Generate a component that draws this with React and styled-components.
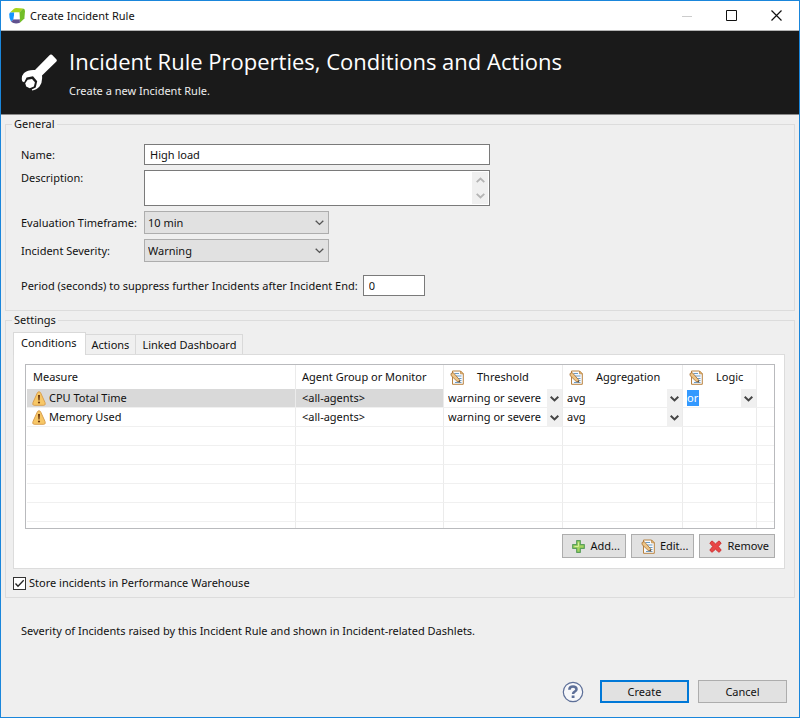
import React from "react";
import styled, { createGlobalStyle, css } from "styled-components";

const GlobalStyle = createGlobalStyle`
  *, *::before, *::after { box-sizing: border-box; }
  body { margin: 0; background: #efefef; }
  body, button, input, select, textarea {
    font-family: "Noto Sans", "Open Sans", sans-serif;
    font-size: 11px;
    line-height: 16px;
    color: #111;
  }
`;

const Window = styled.main`
  display: flex;
  flex-direction: column;
  min-height: 100vh;
  border: 1px solid #1a86db;
  background: #efefef;
`;

const TitleBar = styled.header`
  display: flex;
  align-items: center;
  height: 30px;
  padding-left: 8px;
  background: #fff;
  border-bottom: 1px solid #b4b4b4;
`;

const WindowTitle = styled.span`
  flex: 1;
  padding-left: 5px;
`;

const CaptionButton = styled.button`
  display: flex;
  align-items: center;
  justify-content: center;
  width: 45px;
  height: 29px;
  padding: 0;
  border: 0;
  background: transparent;
  color: ${(p) => (p.disabled ? "#ccc" : "#111")};
`;

const Banner = styled.section`
  display: flex;
  align-items: center;
  gap: 11px;
  height: 84px;
  padding-left: 20px;
  background: #1a1a1a;
  border-bottom: 1px solid #8a8a8a;
  color: #fff;
`;

const BannerTitle = styled.h1`
  margin: 0 0 7px;
  font-family: "Open Sans", "Noto Sans", sans-serif;
  font-size: 22px;
  line-height: 30px;
  font-weight: 400;
`;

const BannerText = styled.p`
  margin: 0;
  color: #eee;
`;

const Body = styled.div`
  display: flex;
  flex-direction: column;
  padding: 1px 4px 0;
`;

const Group = styled.fieldset`
  min-width: 0;
  margin: 0 0 1px;
  padding: ${(p) => p.$padding};
  border: 1px solid #dcdcdc;
`;

const GroupTitle = styled.legend`
  margin-left: ${(p) => p.$offset};
  padding: 0 2px;
`;

const Form = styled.div`
  display: grid;
  grid-template-columns: 123px minmax(0, 346px);
  row-gap: 5px;
  align-items: center;
`;

const FieldLabel = styled.label`
  white-space: nowrap;
  ${(p) => p.$top && css`align-self: start;`}
`;

const TextBox = styled.input`
  width: ${(p) => (p.$short ? "62px" : "100%")};
  height: 21px;
  padding: 0 5px;
  border: 1px solid #7a7a7a;
  background: #fff;
  outline: 0;
`;

const AreaFrame = styled.div`
  display: flex;
  height: 36px;
  padding: 1px;
  border: 1px solid #7a7a7a;
  background: #fff;
`;

const Area = styled.textarea`
  flex: 1;
  min-width: 0;
  padding: 2px 4px;
  border: 0;
  outline: 0;
  resize: none;
  overflow: hidden;
  background: transparent;
`;

const ScrollTrack = styled.div`
  display: flex;
  flex-direction: column;
  align-items: center;
  justify-content: space-between;
  width: 16px;
  padding: 4px 0;
  background: #f0f0f0;
  color: #b4b4b4;
`;

const DropFrame = styled.span`
  display: grid;
  grid-template-columns: 1fr 17px;
  align-items: center;
  width: 185px;
  height: 23px;
  border: 1px solid #adadad;
  background: #e1e1e1;
  color: #555;
`;

const Drop = styled.select`
  grid-column: 1 / 3;
  grid-row: 1;
  width: 100%;
  height: 21px;
  padding: 0 3px;
  border: 0;
  outline: 0;
  appearance: none;
  background: transparent;
`;

const DropArrow = styled.span`
  display: flex;
  justify-content: center;
  grid-column: 2;
  grid-row: 1;
  pointer-events: none;
`;

const PeriodRow = styled.div`
  display: flex;
  align-items: center;
  gap: 5px;
  margin-top: 13px;
`;

const TabList = styled.div`
  display: flex;
  align-items: flex-end;
  height: 23px;
`;

const Tab = styled.button`
  height: 20px;
  margin: 0;
  padding: 0 6px;
  border: 1px solid #d9d9d9;
  border-left-width: 0;
  border-bottom: 0;
  background: #f0f0f0;
  ${(p) =>
    p.$active &&
    css`
      height: 23px;
      margin-bottom: -1px;
      padding: 0 8px 3px 7px;
      border-left-width: 1px;
      background: #fff;
      position: relative;
    `}
`;

const TabPanel = styled.div`
  padding: 9px 9px 10px 11px;
  border: 1px solid #dcdcdc;
  background: #fff;
`;

const TableFrame = styled.div`
  height: 165px;
  padding-left: 1px;
  border: 1px solid #b9babd;
  overflow: hidden;
`;

const Table = styled.table`
  width: 100%;
  table-layout: fixed;
  border-collapse: separate;
  border-spacing: 0;
`;

const Col = styled.col`
  width: ${(p) => p.$width};
`;

const HeadCell = styled.th`
  height: 24px;
  padding: 0 6px;
  border-right: 1px solid #ebebeb;
  font-weight: 400;
  text-align: left;
  white-space: nowrap;
  &:last-child { border-right: 0; }
`;

const HeadContent = styled.span`
  display: flex;
  align-items: center;
  gap: 13px;
`;

const Cell = styled.td`
  height: 19px;
  padding: ${(p) => (p.$combo ? "0" : "0 6px")};
  border-right: 1px solid #ebebeb;
  border-bottom: 1px solid #f0f0f0;
  background: ${(p) => (p.$selected ? "#d9d9d9" : "#fff")};
  white-space: nowrap;
  &:last-child { border-right: 0; }
`;

const Measure = styled.span`
  display: flex;
  align-items: center;
  gap: 3px;
  margin-left: -1px;
`;

const CellCombo = styled.span`
  display: flex;
  align-items: center;
  justify-content: space-between;
  height: 18px;
  padding-left: 4px;
`;

const CellSelect = styled.select`
  flex: ${(p) => (p.$highlight ? "none" : "1")};
  width: ${(p) => (p.$highlight ? "12px" : "auto")};
  min-width: 0;
  height: ${(p) => (p.$highlight ? "16px" : "18px")};
  padding: 0;
  border: 0;
  outline: 0;
  appearance: none;
  background: ${(p) => (p.$highlight ? "#3399ff" : "transparent")};
  color: ${(p) => (p.$highlight ? "#fff" : "#111")};
`;

const CellArrow = styled.span`
  display: flex;
  align-items: center;
  justify-content: center;
  width: 15px;
  height: 19px;
  background: #f0f0f0;
  color: #444;
`;

const ActionBar = styled.div`
  display: flex;
  justify-content: flex-end;
  gap: 5px;
  margin-top: 5px;
`;

const ActionButton = styled.button`
  display: flex;
  align-items: center;
  gap: 5px;
  height: 24px;
  padding: 0 5px 0 9px;
  border: 1px solid #adadad;
  background: #e1e1e1;
`;

const CheckLabel = styled.label`
  display: flex;
  align-items: center;
  gap: 3px;
  margin-top: 6px;
`;

const CheckFrame = styled.span`
  display: grid;
  & > * { grid-area: 1 / 1; }
  & > svg { pointer-events: none; visibility: hidden; }
  & > input:checked + svg { visibility: visible; }
`;

const CheckBox = styled.input`
  appearance: none;
  width: 13px;
  height: 13px;
  margin: 0;
  border: 1px solid #333;
  background: #fff;
`;

const Hint = styled.p`
  margin: 0;
  padding: 24px 16px 0;
`;

const Footer = styled.footer`
  display: flex;
  align-items: center;
  justify-content: flex-end;
  gap: 9px;
  margin-top: auto;
  padding: 0 12px 14px;
`;

const HelpButton = styled.button`
  display: flex;
  margin-right: 7px;
  padding: 0;
  border: 0;
  background: transparent;
`;

const DialogButton = styled.button`
  width: 89px;
  height: 23px;
  padding: 0;
  border: ${(p) => (p.$primary ? "2px solid #0078d7" : "1px solid #adadad")};
  background: #e1e1e1;
`;

const Chevron = ({ size = 9, up = false, weight = 1.4 }) => (
  <svg width={size} height={size} viewBox="0 0 9 9" fill="none" stroke="currentColor" strokeWidth={weight}>
    <path d={up ? "M.7 6.2 4.5 2.6 8.3 6.2" : "M.7 2.8 4.5 6.4 8.3 2.8"} />
  </svg>
);

const LogoIcon = () => (
  <svg width="16" height="16" viewBox="0 0 16 16">
    <path d="M1 4.500 5 .8Q6 0 7.500.1L14 .5 10.300 4.600Z" fill="#a8d51a" />
    <path d="M14 .5Q16 .8 16 3L15.400 10.500 10.900 14.800 10.300 4.600Z" fill="#73be28" />
    <path d="M1 4.500H5.300L4.600 11.300 2 13.400Q0 10 .2 6Z" fill="#1496ff" />
    <path d="M4.600 11.300H10.800L10.900 14.800Q5.500 16.500 2 13.700Z" fill="#60518f" />
    <path d="M5.300 4.600H10.300L10.600 11.300H4.600Z" fill="#fff" />
  </svg>
);

const WrenchIcon = () => (
  <svg width="37" height="38" viewBox="0 0 37 38">
    <path
      fill="#fff"
      d="M29 .8Q30 0 31 .8L35.500 5.500Q36.200 6.500 35.400 7.500L21 21.500Q21.800 28 18.500 32.500 15.500 36 11 36.500L10.800 34.800 13.800 33.400 15.200 27.500 11.600 23.200 5.600 24.400 3.400 28.500 1.200 27.200Q-.2 22.500 3 19 7 15.500 14 16Z"
    />
    <path fill="#1a1a1a" d="m5.600 23.400 6.400-1.200 4.200 5.100-1.500 6.300-4.100 1.900-4.900-1.700-2.600-5.300Z" />
    <path fill="#fff" d="m6.700 25.800 4.300-.9 2.900 3.400-1 4.100-4.200 1.900-3.500-1.700-1-3.400Z" />
  </svg>
);

const WarningIcon = () => (
  <svg width="14" height="15" viewBox="0 0 14 15">
    <path d="M7 .8Q8.200.8 8.800 2.200L13 11.500Q14 14.300 11.800 14.300H2.200Q0 14.300 1 11.500L5.200 2.200Q5.800.8 7 .8Z" fill="#f7c766" stroke="#d9a052" />
    <path d="M6 4H8L7.600 9.500H6.400Z" fill="#6e3a10" />
    <circle cx="7" cy="11.500" r="1.100" fill="#6e3a10" />
  </svg>
);

const EditIcon = () => (
  <svg width="14" height="15" viewBox="0 0 14 15">
    <path d="M2.500 1H10.500L13.300 3.800V14.300H2.500Z" fill="#f8fbff" stroke="#b9823f" />
    <path d="M10.500 1V3.800H13.300Z" fill="#ecc27d" stroke="#b9823f" strokeWidth=".7" />
    <path d="M4.500 3.500H9M6 6H11.500M8 8.500H11.500M9 10.500H11.500M5 12.500H11.500" stroke="#6c9cc4" />
    <path d="M1 3.500 3.200 2.600 9.300 9.500 9.800 12.200 7 11.300 1 5.500Z" fill="#edc486" stroke="#a46d32" strokeWidth=".8" />
    <path d="M8.300 11.700 9.800 12.200 9.400 10.500Z" fill="#333" />
  </svg>
);

const AddIcon = () => (
  <svg width="13" height="13" viewBox="0 0 13 13">
    <path d="M4.700.7H8.300V4.700H12.300V8.300H8.300V12.300H4.700V8.300H.7V4.700H4.700Z" fill="#a4d65e" stroke="#5a9f5c" strokeWidth="1.200" strokeLinejoin="round" />
    <path d="M6.500 2.500V6.500H2.500" stroke="#d5ef9d" fill="none" />
  </svg>
);

const RemoveIcon = () => (
  <svg width="13" height="13" viewBox="0 0 13 13">
    <path d="M3 .9 6.500 3.900 10 .9 12.200 3 9.300 6.500 12.200 10.200 10 12.300 6.500 9.200 3 12.300.8 10.200 3.700 6.500.8 3Z" fill="#e84545" stroke="#cf3131" strokeLinejoin="round" />
  </svg>
);

const HelpIcon = () => (
  <svg width="22" height="22" viewBox="0 0 22 22" fill="none" stroke="#5d6f98">
    <circle cx="11" cy="11" r="9.700" fill="#f6f7fa" strokeWidth="1.200" />
    <path d="M7.400 8.800Q7.400 5.500 11 5.500 14.500 5.500 14.500 8.300 14.500 9.800 12.700 10.700 11.100 11.500 11.100 13" strokeWidth="2.600" />
    <path d="M11.100 14.500V17" strokeWidth="2.800" />
  </svg>
);

const columns = [
  { name: "Measure", width: "auto" },
  { name: "Agent Group or Monitor", width: "148px" },
  { name: "Threshold", width: "119px", editable: true },
  { name: "Aggregation", width: "120px", editable: true },
  { name: "Logic", width: "74px", editable: true },
  { name: "", width: "17px" },
];

const measures = [
  { name: "CPU Total Time", agents: "<all-agents>", threshold: "warning or severe", aggregation: "avg", logic: "or" },
  { name: "Memory Used", agents: "<all-agents>", threshold: "warning or severe", aggregation: "avg" },
];

const emptyRows = [0, 1, 2, 3, 4, 5];

function Combo({ label, value, highlight }) {
  return (
    <CellCombo>
      <CellSelect aria-label={label} $highlight={highlight}>
        <option>{value}</option>
      </CellSelect>
      <CellArrow><Chevron weight={2} size={9} /></CellArrow>
    </CellCombo>
  );
}

function Dropdown({ id, value }) {
  return (
    <DropFrame>
      <Drop id={id}><option>{value}</option></Drop>
      <DropArrow><Chevron size={9} /></DropArrow>
    </DropFrame>
  );
}

function ConditionsTable() {
  return (
    <TableFrame>
      <Table>
        <colgroup>
          {columns.map((c) => <Col key={c.name} $width={c.width} />)}
        </colgroup>
        <thead>
          <tr>
            {columns.map((c) => (
              <HeadCell key={c.name} scope="col">
                <HeadContent>
                  {c.editable && <EditIcon />}
                  {c.name}
                </HeadContent>
              </HeadCell>
            ))}
          </tr>
        </thead>
        <tbody>
          {measures.map((m, i) => (
            <tr key={m.name}>
              <Cell $selected={i === 0}><Measure><WarningIcon />{m.name}</Measure></Cell>
              <Cell $selected={i === 0}>{m.agents}</Cell>
              <Cell $combo><Combo label="Threshold" value={m.threshold} /></Cell>
              <Cell $combo><Combo label="Aggregation" value={m.aggregation} /></Cell>
              <Cell $combo>{m.logic && <Combo label="Logic" value={m.logic} highlight />}</Cell>
              <Cell />
            </tr>
          ))}
          {emptyRows.map((r) => (
            <tr key={r}>{columns.map((c) => <Cell key={c.name} />)}</tr>
          ))}
        </tbody>
      </Table>
    </TableFrame>
  );
}

export default function App() {
  return (
    <>
      <GlobalStyle />
      <Window>
        <TitleBar>
          <LogoIcon />
          <WindowTitle>Create Incident Rule</WindowTitle>
          <CaptionButton aria-label="Minimize" disabled>
            <svg width="10" height="10"><path d="M0 5.500H10" stroke="currentColor" /></svg>
          </CaptionButton>
          <CaptionButton aria-label="Maximize">
            <svg width="11" height="11"><path d="M.5.5H10.500V10.500H.5Z" fill="none" stroke="currentColor" /></svg>
          </CaptionButton>
          <CaptionButton aria-label="Close">
            <svg width="11" height="11"><path d="M.5.5 10.500 10.500M10.500.5.5 10.500" stroke="currentColor" strokeWidth="1.200" /></svg>
          </CaptionButton>
        </TitleBar>

        <Banner>
          <WrenchIcon />
          <div>
            <BannerTitle>Incident Rule Properties, Conditions and Actions</BannerTitle>
            <BannerText>Create a new Incident Rule.</BannerText>
          </div>
        </Banner>

        <Body>
          <Group $padding="12px 15px 14px">
            <GroupTitle $offset="-9px">General</GroupTitle>
            <Form>
              <FieldLabel htmlFor="name">Name:</FieldLabel>
              <TextBox id="name" defaultValue="High load" />
              <FieldLabel htmlFor="description" $top>Description:</FieldLabel>
              <AreaFrame>
                <Area id="description" />
                <ScrollTrack>
                  <Chevron weight={1.8} up />
                  <Chevron weight={1.8} />
                </ScrollTrack>
              </AreaFrame>
              <FieldLabel htmlFor="timeframe">Evaluation Timeframe:</FieldLabel>
              <Dropdown id="timeframe" value="10 min" />
              <FieldLabel htmlFor="severity">Incident Severity:</FieldLabel>
              <Dropdown id="severity" value="Warning" />
            </Form>
            <PeriodRow>
              <label htmlFor="period">Period (seconds) to suppress further Incidents after Incident End:</label>
              <TextBox id="period" $short defaultValue="0" />
            </PeriodRow>
          </Group>

          <Group $padding="3px 9px 6px 7px">
            <GroupTitle $offset="-1px">Settings</GroupTitle>
            <TabList role="tablist">
              <Tab role="tab" aria-selected="true" $active>Conditions</Tab>
              <Tab role="tab" aria-selected="false">Actions</Tab>
              <Tab role="tab" aria-selected="false">Linked Dashboard</Tab>
            </TabList>
            <TabPanel role="tabpanel">
              <ConditionsTable />
              <ActionBar>
                <ActionButton><AddIcon />Add...</ActionButton>
                <ActionButton><EditIcon />Edit...</ActionButton>
                <ActionButton><RemoveIcon />Remove</ActionButton>
              </ActionBar>
            </TabPanel>
            <CheckLabel>
              <CheckFrame>
                <CheckBox type="checkbox" defaultChecked />
                <svg width="13" height="13"><path d="M2.500 6.500 5 9.300 10.700 3.300" fill="none" stroke="#222" strokeWidth="1.300" /></svg>
              </CheckFrame>
              Store incidents in Performance Warehouse
            </CheckLabel>
          </Group>
          <Hint>Severity of Incidents raised by this Incident Rule and shown in Incident-related Dashlets.</Hint>
        </Body>

        <Footer>
          <HelpButton aria-label="Help"><HelpIcon /></HelpButton>
          <DialogButton $primary>Create</DialogButton>
          <DialogButton>Cancel</DialogButton>
        </Footer>
      </Window>
    </>
  );
}
